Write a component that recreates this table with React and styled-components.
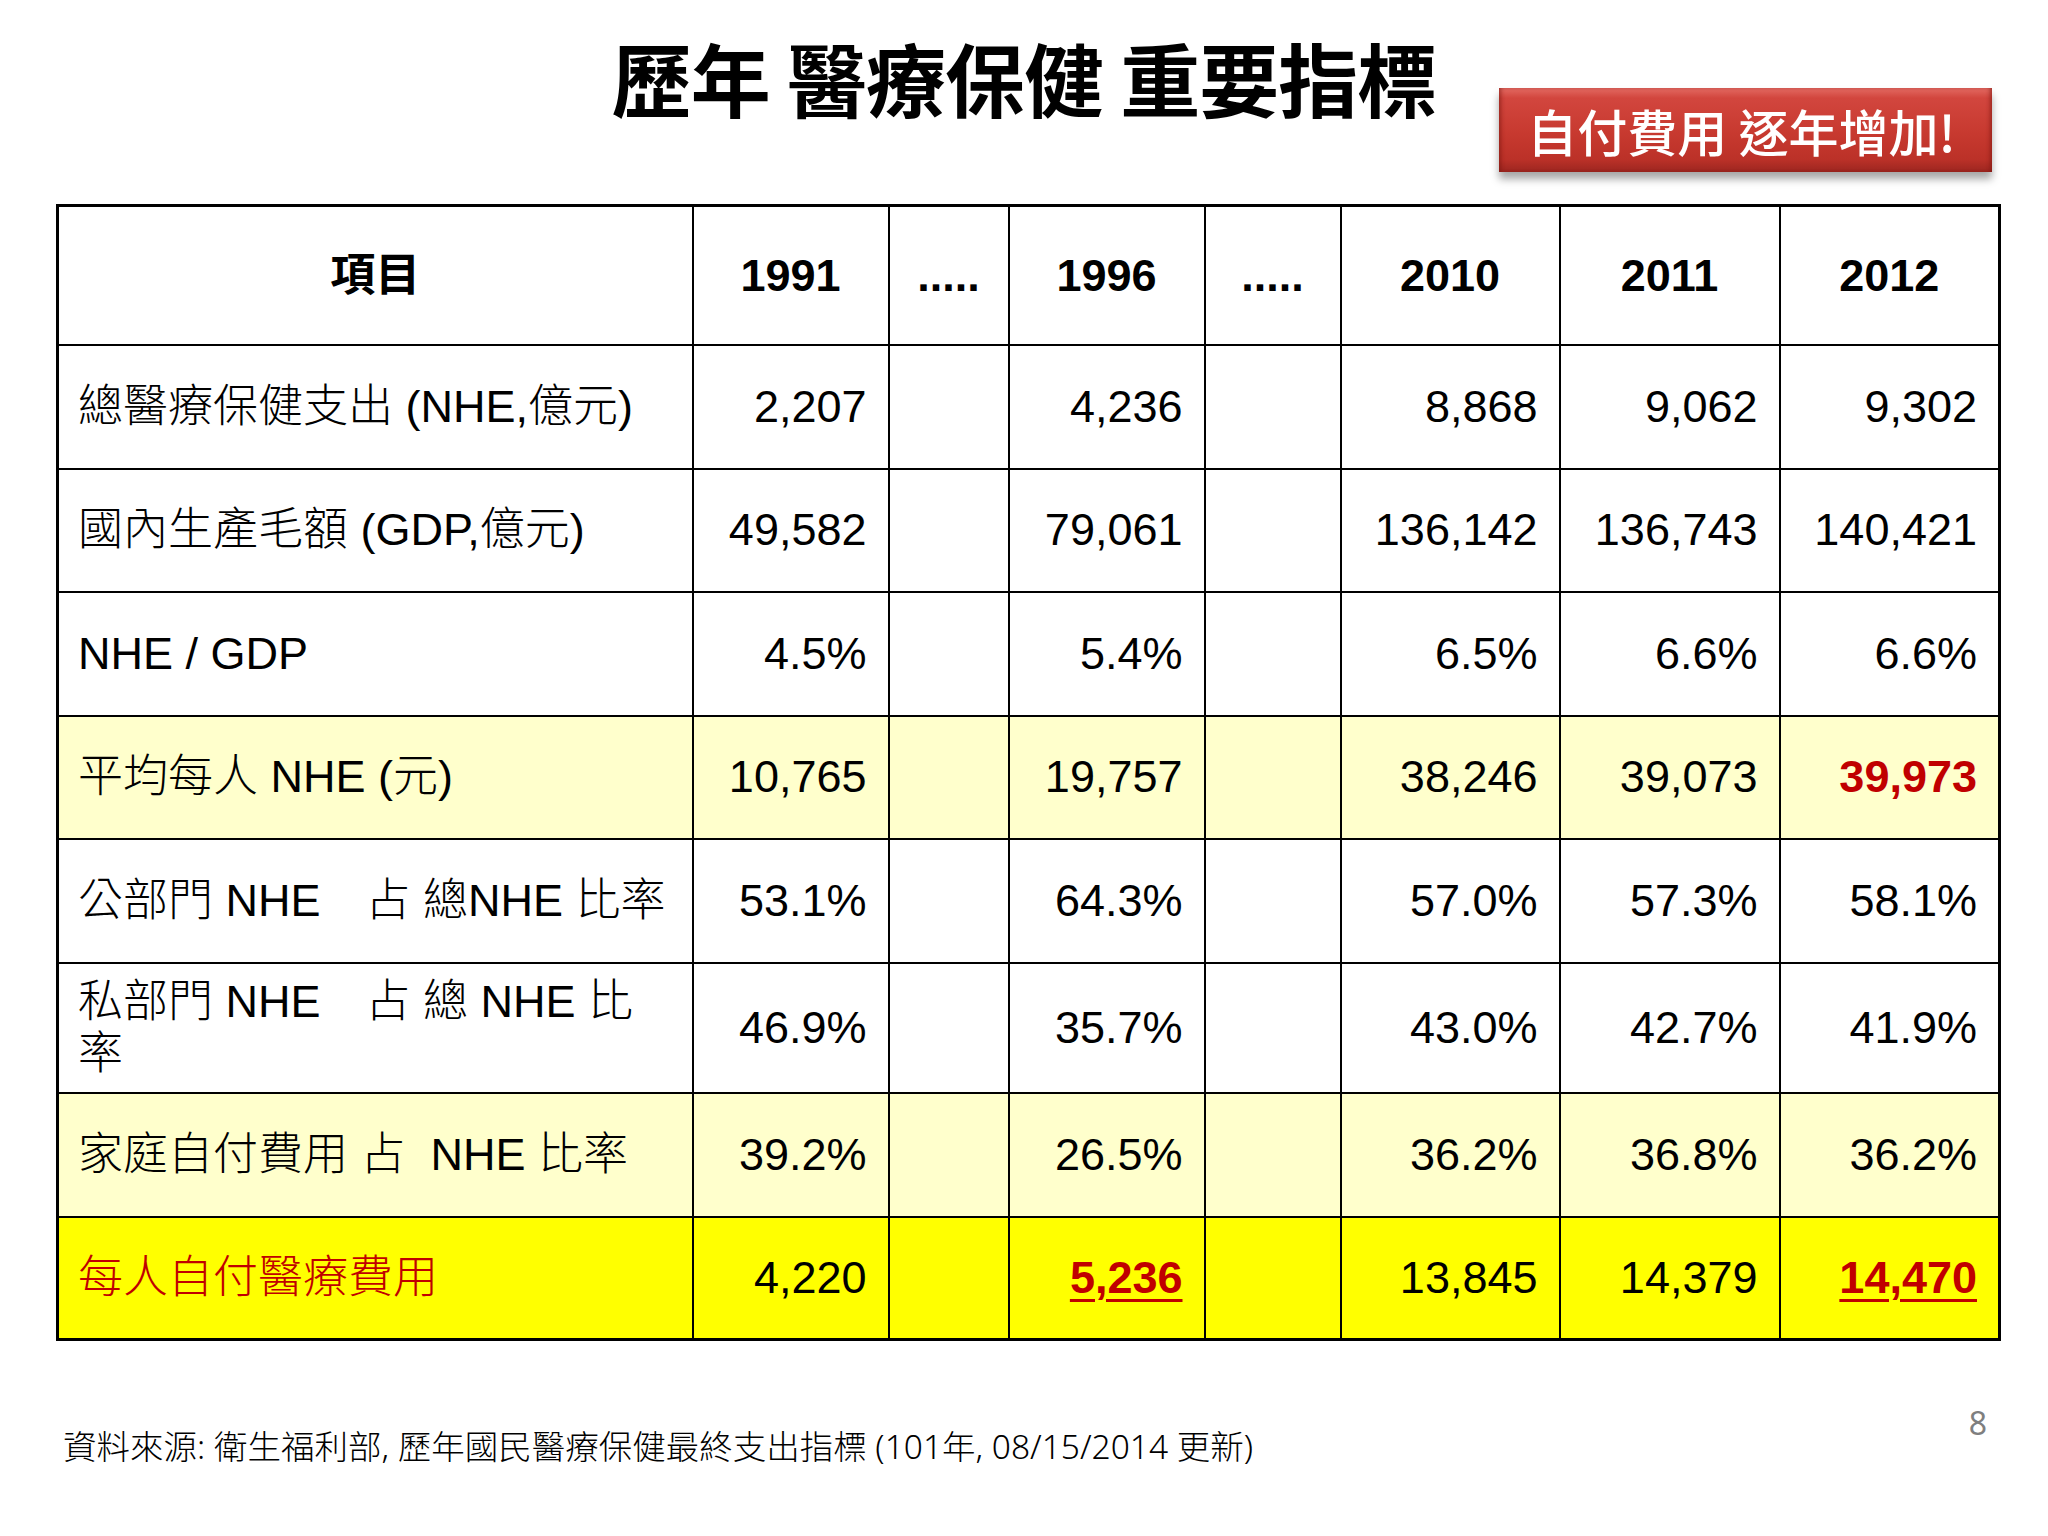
import styled, { createGlobalStyle } from "styled-components";

const GlobalStyle = createGlobalStyle`
  html, body {
    margin: 0;
    padding: 0;
    background: #ffffff;
  }
  body {
    font-family: "Liberation Sans", "Noto Sans CJK TC", sans-serif;
    color: #000000;
  }
`;

const years = ["1991", ".....", "1996", ".....", "2010", "2011", "2012"];
const colWidths = [635, 196, 120, 196, 136, 219, 220, 220];

// bg: 白 / 淡黃 / 亮黃 ; em: 粗體紅字 ; under: 加底線
const rows = [
  {
    label: "總醫療保健支出 (NHE,億元)",
    values: ["2,207", "", "4,236", "", "8,868", "9,062", "9,302"],
    height: 124,
  },
  {
    label: "國內生產毛額 (GDP,億元)",
    values: ["49,582", "", "79,061", "", "136,142", "136,743", "140,421"],
    height: 123,
  },
  {
    label: "NHE / GDP",
    values: ["4.5%", "", "5.4%", "", "6.5%", "6.6%", "6.6%"],
    height: 124,
  },
  {
    label: "平均每人 NHE (元)",
    values: ["10,765", "", "19,757", "", "38,246", "39,073", "39,973"],
    bg: "light",
    em: [6],
    height: 123,
  },
  {
    label: "公部門 NHE\u3000占 總NHE 比率",
    values: ["53.1%", "", "64.3%", "", "57.0%", "57.3%", "58.1%"],
    height: 124,
  },
  {
    label: (
      <>
        私部門 NHE{"\u3000"}占 總 NHE 比
        <br />率
      </>
    ),
    values: ["46.9%", "", "35.7%", "", "43.0%", "42.7%", "41.9%"],
    height: 130,
  },
  {
    label: "家庭自付費用 占\u00a0 NHE 比率",
    values: ["39.2%", "", "26.5%", "", "36.2%", "36.8%", "36.2%"],
    bg: "light",
    height: 124,
  },
  {
    label: "每人自付醫療費用",
    values: ["4,220", "", "5,236", "", "13,845", "14,379", "14,470"],
    bg: "bright",
    redLabel: true,
    em: [2, 6],
    under: [2, 6],
    height: 123,
  },
];

const bgColors = {
  light: "#ffffcc",
  bright: "#ffff00",
};

function App() {
  return (
    <Page>
      <GlobalStyle />
      <Header>
        <Title>歷年 醫療保健 重要指標</Title>
        <BadgeSlot>
          <Badge>自付費用 逐年增加!</Badge>
        </BadgeSlot>
      </Header>

      <TableWrap>
        <Table>
          <colgroup>
            {colWidths.map((w, i) => (
              <col key={i} style={{ width: w }} />
            ))}
          </colgroup>
          <thead>
            <tr style={{ height: 139 }}>
              <HeadCell>項目</HeadCell>
              {years.map((y, i) => (
                <HeadCell key={i}>{y}</HeadCell>
              ))}
            </tr>
          </thead>
          <tbody>
            {rows.map((row, ri) => (
              <Row key={ri} $bg={bgColors[row.bg]} style={{ height: row.height }}>
                <LabelCell $red={row.redLabel}>{row.label}</LabelCell>
                {row.values.map((v, ci) => (
                  <NumCell key={ci}>
                    {row.em && row.em.includes(ci) ? (
                      <Em $under={row.under && row.under.includes(ci)}>{v}</Em>
                    ) : (
                      v
                    )}
                  </NumCell>
                ))}
              </Row>
            ))}
          </tbody>
        </Table>
      </TableWrap>

      <Footer>
        <Source>
          資料來源: 衛生福利部, 歷年國民醫療保健最終支出指標 (101年, 08/15/2014 更新)
        </Source>
        <PageNum>8</PageNum>
      </Footer>
    </Page>
  );
}

const Page = styled.div`
  width: 2048px;
  height: 1536px;
  background: #ffffff;
  overflow: hidden;
`;

const Header = styled.div`
  height: 204px;
  display: grid;
  grid-template-columns: 1fr auto 1fr;
  align-items: start;
`;

const Title = styled.h1`
  grid-column: 2;
  margin: 36px 0 0;
  font-family: "Noto Sans CJK TC", sans-serif;
  font-weight: 700;
  font-size: 80px;
  line-height: 1;
  letter-spacing: -1px;
  white-space: nowrap;
`;

const BadgeSlot = styled.div`
  grid-column: 3;
  display: flex;
  justify-content: flex-end;
  padding: 88px 56px 0 0;
`;

const Badge = styled.div`
  width: 493px;
  height: 84px;
  display: flex;
  align-items: center;
  justify-content: center;
  box-sizing: border-box;
  padding-right: 8px;
  color: #ffffff;
  font-family: "Noto Sans CJK TC", sans-serif;
  font-weight: 500;
  font-size: 50px;
  line-height: 1;
  white-space: nowrap;
  background: linear-gradient(
    to bottom,
    #e36a62 0%,
    #d2463e 12%,
    #c7392f 55%,
    #bb3128 85%,
    #9c2620 100%
  );
  box-shadow: inset 4px 0 4px -2px rgba(120, 20, 15, 0.6),
    inset -4px 0 4px -2px rgba(120, 20, 15, 0.6),
    0 7px 8px rgba(0, 0, 0, 0.35);
`;

const TableWrap = styled.div`
  padding-left: 56px;
`;

const Table = styled.table`
  width: 1942px;
  table-layout: fixed;
  border-collapse: collapse;
  border: 3px solid #000000;
`;

const HeadCell = styled.th`
  border: 2px solid #000000;
  padding: 0;
  text-align: center;
  vertical-align: middle;
  font-family: "Liberation Sans", "Noto Sans CJK TC", sans-serif;
  font-weight: 700;
  font-size: 45px;
  line-height: 1;
`;

const Row = styled.tr`
  background: ${(p) => p.$bg || "#ffffff"};
`;

const LabelCell = styled.td`
  border: 2px solid #000000;
  padding: 0 10px 0 19px;
  vertical-align: middle;
  text-align: left;
  font-size: 45px;
  font-weight: 300;
  line-height: 52px;
  white-space: nowrap;
  color: ${(p) => (p.$red ? "#c00000" : "#000000")};
`;

const NumCell = styled.td`
  border: 2px solid #000000;
  padding: 0 21px 0 0;
  vertical-align: middle;
  text-align: right;
  font-size: 45px;
  line-height: 52px;
  white-space: nowrap;
`;

const Em = styled.span`
  color: #c00000;
  font-weight: 700;
  text-decoration: ${(p) => (p.$under ? "underline" : "none")};
  text-decoration-thickness: 3px;
  text-underline-offset: 6px;
`;

const Footer = styled.div`
  margin-top: 66px;
  display: flex;
  justify-content: space-between;
  align-items: flex-start;
  padding: 0 61px 0 63px;
`;

const Source = styled.div`
  padding-top: 23px;
  font-family: "Noto Sans", "Noto Sans CJK TC", sans-serif;
  font-size: 33.5px;
  font-weight: 300;
  line-height: 1;
  white-space: nowrap;
`;

const PageNum = styled.div`
  font-family: "Noto Sans", sans-serif;
  font-size: 32px;
  line-height: 1;
  color: #7f7f7f;
`;

export default App;
